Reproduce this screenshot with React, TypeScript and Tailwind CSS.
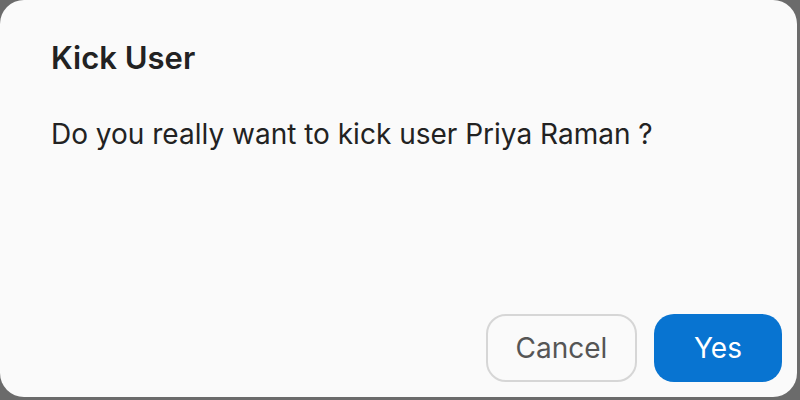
export default function App() {
  return (
    <div className="flex h-[400px] w-[800px] bg-[#6b6b6b] font-['Inter',sans-serif]">
      <div className="flex h-[397px] w-[797px] flex-col rounded-[24px] bg-[#fafafa] pl-[51px] pr-[15px] pt-[38px] pb-[15px]">
        <h2 className="text-[31px] font-semibold leading-[40px] text-[#222]">Kick User</h2>
        <p className="mt-[39px] text-[28px] leading-[34px] text-[#222]">Do you really want to kick user Priya Raman ?</p>
        <div className="mt-auto flex justify-end gap-[17px]">
          <button className="h-[68px] w-[151px] rounded-[20px] border-2 border-[#d6d6d6] text-[28px] text-[#555]">
            Cancel
          </button>
          <button className="h-[68px] w-[128px] rounded-[20px] bg-[#0874d1] text-[28px] text-white">
            Yes
          </button>
        </div>
      </div>
    </div>
  )
}
